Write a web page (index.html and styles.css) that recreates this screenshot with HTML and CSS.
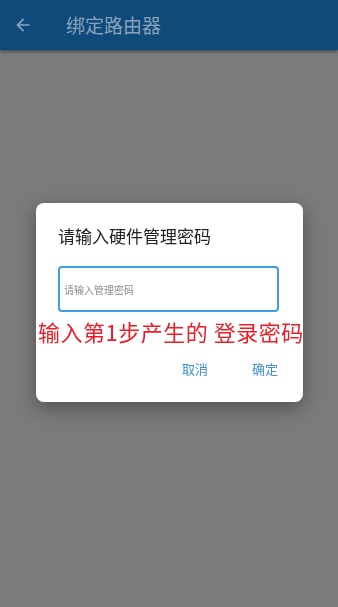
FILE: index.html
```html
<!DOCTYPE html>
<html lang="zh">
<head>
<meta charset="utf-8">
<link rel="stylesheet" href="styles.css">
</head>
<body>
<div class="app">
  <header class="bar">
    <svg class="back" width="20" height="20" viewBox="0 0 24 24"><path d="M20 11H7.83l5.59-5.59L12 4l-8 8 8 8 1.41-1.41L7.83 13H20v-2z" fill="#8aa2bb"/></svg>
    <span class="bar-title">绑定路由器</span>
  </header>
  <main class="content"></main>
</div>
<div class="overlay">
  <div class="dialog">
    <div class="dialog-title">请输入硬件管理密码</div>
    <div class="field"><span class="placeholder">请输入管理密码</span></div>
    <div class="note">输入第1步产生的 登录密码</div>
    <div class="actions">
      <span class="btn">取消</span>
      <span class="btn">确定</span>
    </div>
  </div>
</div>
</body>
</html>
```
FILE: styles.css
```css
html, body {
  margin: 0;
  padding: 0;
  height: 100%;
}
body {
  font-family: "Noto Sans CJK SC", "Noto Sans", Roboto, sans-serif;
  background: #7b7b7b;
}
.app {
  height: 100%;
  display: flex;
  flex-direction: column;
}
.bar {
  height: 50px;
  flex: 0 0 50px;
  background: #0e4a7a;
  display: flex;
  align-items: center;
  box-shadow: 0 2px 3px rgba(0,0,0,0.35);
  position: relative;
  z-index: 1;
}
.back {
  margin-left: 13px;
  display: block;
}
.bar-title {
  margin-left: 33px;
  font-size: 19px;
  color: #8aa2bb;
  margin-top: -2px;
}
.content {
  flex: 1;
}
.overlay {
  position: fixed;
  inset: 0;
  display: flex;
  align-items: center;
  justify-content: center;
  z-index: 2;
}
.dialog {
  width: 267px;
  height: 199px;
  margin-left: 1px;
  margin-top: -2px;
  box-sizing: border-box;
  background: #ffffff;
  border-radius: 8px;
  padding: 21px 24px 0 22px;
  display: flex;
  flex-direction: column;
  box-shadow: 0 6px 20px rgba(0,0,0,0.35);
}
.dialog-title {
  font-size: 17px;
  line-height: 24px;
  color: #222222;
}
.field {
  margin-top: 18px;
  height: 46px;
  box-sizing: border-box;
  border: 2px solid #3f9be2;
  border-radius: 4px;
  display: flex;
  align-items: center;
  padding-left: 4px;
}
.placeholder {
  font-size: 10px;
  color: #8a8a8a;
}
.note {
  margin: 3px -22px 0 -20px;
  text-align: center;
  white-space: nowrap;
  font-size: 22px;
  line-height: 32px;
  color: #ee1c25;
  letter-spacing: 0.5px;
}
.actions {
  margin-top: 13px;
  display: flex;
  justify-content: flex-end;
  gap: 44px;
  padding-right: 1px;
}
.btn {
  font-size: 13px;
  line-height: 18px;
  color: #3d8fd0;
}
```
